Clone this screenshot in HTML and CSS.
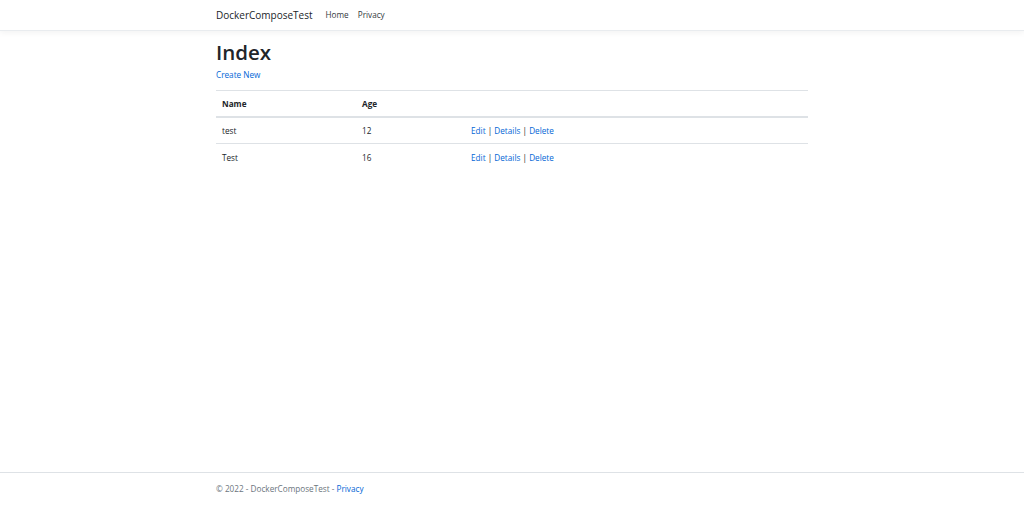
FILE: index.html
```html
<!DOCTYPE html>
<html lang="en">
<head>
<meta charset="utf-8">
<title>Index - DockerComposeTest</title>
<link rel="stylesheet" href="styles.css">
</head>
<body>
<div class="page">
  <header class="navbar">
    <div class="container nav-inner">
      <a class="brand" href="#">DockerComposeTest</a>
      <ul class="nav">
        <li><a class="nav-link" href="#">Home</a></li>
        <li><a class="nav-link" href="#">Privacy</a></li>
      </ul>
    </div>
  </header>
  <main class="container main">
    <h1 class="title">Index</h1>
    <p class="create"><a href="#">Create New</a></p>
    <table class="table">
      <thead>
        <tr>
          <th class="col-name">Name</th>
          <th class="col-age">Age</th>
          <th></th>
        </tr>
      </thead>
      <tbody>
        <tr>
          <td>test</td>
          <td>12</td>
          <td><a href="#">Edit</a> | <a href="#">Details</a> | <a href="#">Delete</a></td>
        </tr>
        <tr>
          <td>Test</td>
          <td>16</td>
          <td><a href="#">Edit</a> | <a href="#">Details</a> | <a href="#">Delete</a></td>
        </tr>
      </tbody>
    </table>
  </main>
  <footer class="footer">
    <div class="container">&copy; 2022 - DockerComposeTest - <a href="#">Privacy</a></div>
  </footer>
</div>
</body>
</html>
```
FILE: styles.css
```css
* { box-sizing: border-box; }
html, body { margin: 0; padding: 0; }
body {
  font-family: "Open Sans", "Noto Sans", "Liberation Sans", sans-serif;
  font-size: 8.2px;
  line-height: 1.5;
  color: #212529;
  background: #fff;
}
a { color: #0366d6; text-decoration: none; }
.page {
  min-height: 100vh;
  display: flex;
  flex-direction: column;
}
.container {
  width: 592px;
  margin: 0 auto;
}
.navbar {
  height: 31px;
  border-bottom: 1px solid #e9ecef;
  box-shadow: 0 2px 6px rgba(0, 0, 0, 0.05);
  display: flex;
  align-items: center;
}
.nav-inner {
  display: flex;
  align-items: center;
}
.brand {
  color: #212529;
  font-size: 10px;
  margin-right: 8.5px;
}
.nav {
  list-style: none;
  margin: 0;
  padding: 0;
  display: flex;
}
.nav-link {
  display: block;
  color: #343a40;
  font-size: 8.2px;
  padding: 0 4.5px;
}
.main {
  flex: 1;
  padding-top: 9px;
}
.title {
  font-size: 20.5px;
  font-weight: 600;
  line-height: 1.2;
  margin: 0 0 3.5px 0;
}
.create {
  margin: 0 0 8.5px 0;
  line-height: 13px;
}
.table {
  width: 100%;
  border-collapse: collapse;
}
.table th, .table td {
  text-align: left;
  padding: 6.2px 6px;
  border-top: 1px solid #dee2e6;
  vertical-align: top;
  line-height: 13px;
}
.table th { font-weight: 700; }
.table thead th { border-bottom: 2px solid #dee2e6; }
.col-name { width: 140px; }
.col-age { width: 109px; }
.footer {
  border-top: 1px solid #dee2e6;
  color: #6c757d;
  line-height: 32px;
  white-space: nowrap;
}
```
